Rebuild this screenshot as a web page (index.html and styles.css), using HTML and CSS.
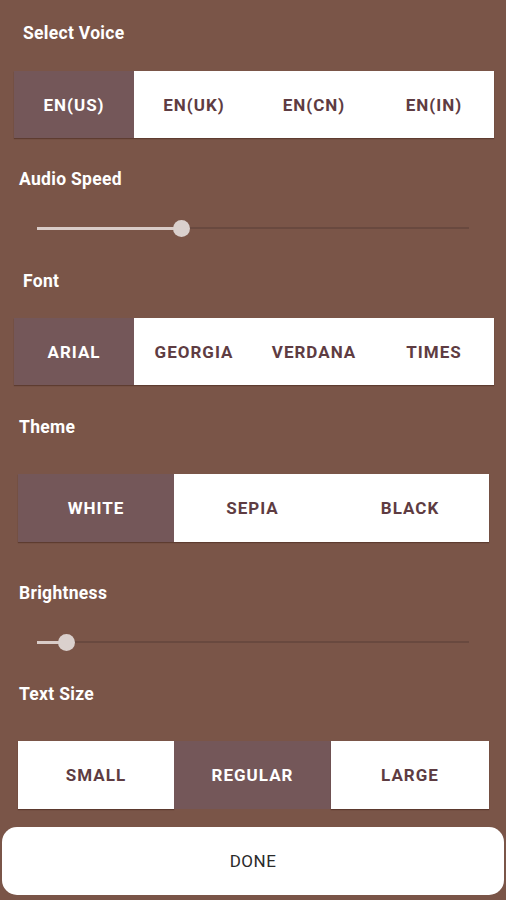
FILE: index.html
```html
<!DOCTYPE html>
<html>
<head>
<meta charset="utf-8">
<link rel="stylesheet" href="styles.css">
</head>
<body>
<div class="panel">
  <div class="label l-voice">Select Voice</div>
  <div class="seg seg-wide s-voice">
    <div class="opt on">EN(US)</div>
    <div class="opt">EN(UK)</div>
    <div class="opt">EN(CN)</div>
    <div class="opt">EN(IN)</div>
  </div>

  <div class="label l-speed">Audio Speed</div>
  <div class="slider sl-speed">
    <div class="fill" style="width:144px"></div>
    <div class="thumb"></div>
    <div class="rest"></div>
  </div>

  <div class="label l-font">Font</div>
  <div class="seg seg-wide s-font">
    <div class="opt on">ARIAL</div>
    <div class="opt">GEORGIA</div>
    <div class="opt">VERDANA</div>
    <div class="opt">TIMES</div>
  </div>

  <div class="label l-theme">Theme</div>
  <div class="seg seg-narrow s-theme">
    <div class="opt on">WHITE</div>
    <div class="opt">SEPIA</div>
    <div class="opt">BLACK</div>
  </div>

  <div class="label l-bright">Brightness</div>
  <div class="slider sl-bright">
    <div class="fill" style="width:29px"></div>
    <div class="thumb"></div>
    <div class="rest"></div>
  </div>

  <div class="label l-size">Text Size</div>
  <div class="seg seg-narrow s-size">
    <div class="opt box">SMALL</div>
    <div class="opt on">REGULAR</div>
    <div class="opt box">LARGE</div>
  </div>

  <div class="done">DONE</div>
</div>
</body>
</html>
```

FILE: styles.css
```css
html, body {
  margin: 0;
  padding: 0;
  background: #7a5548;
}
body {
  width: 506px;
  height: 900px;
  overflow: hidden;
  font-family: Roboto, "Liberation Sans", sans-serif;
}
.panel {
  display: flex;
  flex-direction: column;
}
.label {
  color: #ffffff;
  font-weight: 700;
  font-size: 17.5px;
  letter-spacing: 0.3px;
  line-height: 20px;
  height: 20px;
}
.l-voice { margin: 23px 0 0 23px; }
.s-voice { margin-top: 28px; }
.l-speed { margin: 31px 0 0 19px; }
.sl-speed { margin-top: 29px; }
.l-font { margin: 33px 0 0 23px; }
.s-font { margin-top: 27px; }
.l-theme { margin: 32px 0 0 19px; }
.s-theme { margin-top: 37px; }
.l-bright { margin: 41px 0 0 19px; }
.sl-bright { margin-top: 29px; }
.l-size { margin: 32px 0 0 19px; }
.s-size { margin-top: 37px; }

.seg {
  display: grid;
  height: 67px;
  background: #ffffff;
  box-shadow: 0 1px 1px rgba(60, 30, 20, 0.45);
}
.seg-wide {
  margin-left: 14px;
  width: 480px;
  grid-template-columns: repeat(4, 1fr);
}
.seg-narrow {
  margin-left: 18px;
  width: 471px;
  height: 68px;
  grid-template-columns: 156px 157px 158px;
}
.opt {
  display: flex;
  align-items: center;
  justify-content: center;
  font-size: 17px;
  font-weight: 700;
  color: #5e3c42;
  letter-spacing: 1px;
}
.opt.on {
  background: #745759;
  color: #ffffff;
}
.s-size {
  background: transparent;
  box-shadow: none;
}
.opt.box {
  background: #ffffff;
  box-shadow: 0 1px 1px rgba(60, 30, 20, 0.5);
}

.slider {
  display: flex;
  align-items: center;
  margin-left: 37px;
  width: 432px;
  height: 20px;
}
.fill {
  height: 3px;
  background: #d9ccc8;
}
.rest {
  flex: 1;
  height: 2px;
  background: #69493f;
}
.thumb {
  width: 17px;
  height: 17px;
  border-radius: 50%;
  background: #dad0cd;
  margin-left: -8px;
  margin-right: -9px;
  position: relative;
  z-index: 1;
}

.done {
  margin: 18px 2px 0 2px;
  height: 68px;
  background: #ffffff;
  border-radius: 15px;
  display: flex;
  align-items: center;
  justify-content: center;
  font-size: 17px;
  color: #2a2a2a;
  letter-spacing: 0.5px;
}
```
